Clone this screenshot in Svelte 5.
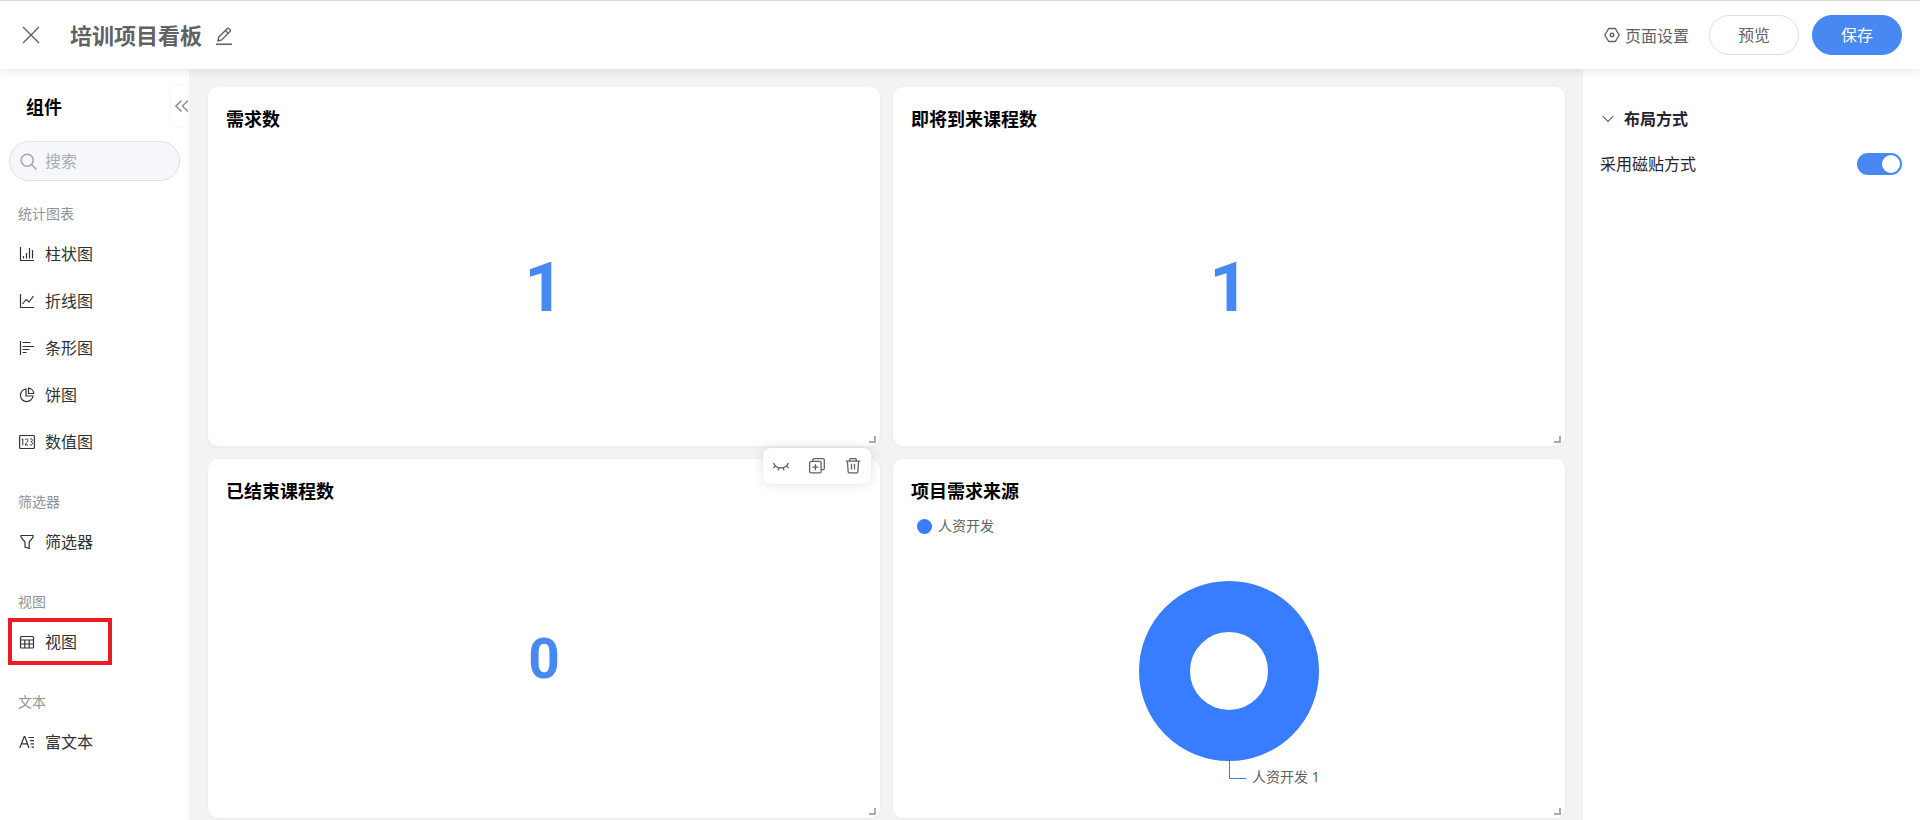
<script lang="ts">
  const groups = [
    {
      title: '统计图表',
      items: [
        { icon: 'bar', label: '柱状图' },
        { icon: 'line', label: '折线图' },
        { icon: 'hbar', label: '条形图' },
        { icon: 'pie', label: '饼图' },
        { icon: 'number', label: '数值图' }
      ]
    },
    { title: '筛选器', items: [{ icon: 'filter', label: '筛选器' }] },
    { title: '视图', items: [{ icon: 'table', label: '视图', marked: true }] },
    { title: '文本', items: [{ icon: 'text', label: '富文本' }] }
  ];

  const cards = [
    { title: '需求数', value: '1', size: 'large' },
    { title: '即将到来课程数', value: '1', size: 'large' },
    { title: '已结束课程数', value: '0', size: 'medium', active: true },
    { title: '项目需求来源', chart: true }
  ];

  let keyword = $state('');
  let tiled = $state(true);
  let layoutOpen = $state(true);
</script>

{#snippet icon(name: string)}
  <svg class="icon" width="16" height="16" viewBox="0 0 16 16" fill="none" stroke="currentColor" stroke-width="1.2" aria-hidden="true">
    {#if name === 'bar'}
      <path d="M1.5 1v13.5H15M4.5 10v2.5M7.5 7v5.5M10.5 2v10.5M13.5 4v8.5" />
    {:else if name === 'line'}
      <path d="M1.5 1v13.5H15M3.5 11l3.6-4.5 3 2.5L14.5 3" />
    {:else if name === 'hbar'}
      <path d="M1.5 1v14M3.5 2.5h8M3.5 6.5H15M3.5 9.5h7M3.5 12.5h4" />
    {:else if name === 'pie'}
      <path d="M7 2a6.3 6.3 0 1 0 7 7H7zM9.5 1.2a5.5 5.5 0 0 1 5.2 5.3H9.5z" />
    {:else if name === 'number'}
      <rect x="0.6" y="1.5" width="14.8" height="13" rx="1" />
      <path stroke-width="1" d="M2.6 5.7l1.2-.9v6.4M6.3 6c.1-1.6 2.7-1.6 2.6.2 0 1.2-2.4 3.2-2.6 4.8h2.8M11 5.2c.8-.9 2.5-.4 2.3 1.1 0 .9-.7 1.4-1.5 1.4 1 0 1.7.6 1.7 1.6 0 1.8-2 2.1-2.7 1.2" />
    {:else if name === 'filter'}
      <path d="M2 1.5h12v1.8L10.2 8v6.5L6 13V8L2 3.3z" />
    {:else if name === 'table'}
      <rect x="1.5" y="2.5" width="13" height="11.5" rx="1" />
      <path d="M1.5 6h13M1.5 10h13M5.8 6v8M10.2 6v8" />
    {:else}
      <path d="M.8 14L5.2 2.5h.6L10 14M2.5 9.8h6M9.5 3.5H15M11 6.7h4M11.7 9.9H15M12.5 13.2H15" />
    {/if}
  </svg>
{/snippet}

<div class="page">
  <header class="topbar">
    <button class="plain close" aria-label="关闭">
      <svg width="18" height="18" viewBox="0 0 18 18" fill="none" stroke="currentColor" stroke-width="1.4">
        <path d="M1 1l16 16M17 1L1 17" />
      </svg>
    </button>
    <h1>培训项目看板</h1>
    <button class="plain edit" aria-label="编辑名称">
      <svg width="16" height="18" viewBox="0 0 16 18" fill="none" stroke="currentColor" stroke-width="1.4">
        <path d="M2 14l.7-3.8L11.4 1.5c.5-.5 1-.5 1.5 0l1.2 1.2c.5.5.5 1 0 1.5L5.7 13 2 14zM9.5 3.5l2.7 2.7M0 17.2h16" />
      </svg>
    </button>
    <div class="actions">
      <button class="plain setting">
        <svg width="16" height="16" viewBox="0 0 16 16" fill="none" stroke="currentColor" stroke-width="1.4">
          <path d="M4.7 1.5h6.6L15.2 8l-3.9 6.5H4.7L.8 8z" stroke-linejoin="round" />
          <circle cx="8" cy="8" r="1.8" />
        </svg>
        页面设置
      </button>
      <button class="btn">预览</button>
      <button class="btn primary">保存</button>
    </div>
  </header>

  <div class="body">
    <aside class="sidebar">
      <div class="sidebar-head">
        <h2>组件</h2>
        <button class="plain collapse" aria-label="收起">
          <svg width="14" height="12" viewBox="0 0 14 12" fill="none" stroke="currentColor" stroke-width="1.6">
            <path d="M6.5.5L1 6l5.5 5.5M13 .5L7.5 6l5.5 5.5" />
          </svg>
        </button>
      </div>
      <label class="search">
        <svg width="17" height="17" viewBox="0 0 17 17" fill="none" stroke="currentColor" stroke-width="1.5">
          <circle cx="7.2" cy="7.2" r="6" />
          <path d="M11.5 11.5l5 5" />
        </svg>
        <input type="text" placeholder="搜索" aria-label="搜索" bind:value={keyword} />
      </label>
      {#each groups as group}
        <section class="group">
          <h3>{group.title}</h3>
          {#each group.items as item}
            <button class="plain item" class:marked={item.marked}>
              {@render icon(item.icon)}
              {item.label}
            </button>
          {/each}
        </section>
      {/each}
    </aside>

    <main class="board">
      {#each cards as card}
        <article class="card">
          <h2>{card.title}</h2>
          {#if card.chart}
            <div class="legend"><span class="dot"></span>人资开发</div>
            <div class="chart">
              <svg width="200" height="220" viewBox="0 0 200 220" role="img" aria-label="人资开发 1">
                <circle cx="100" cy="100" r="64.5" fill="none" stroke="#387dff" stroke-width="51" />
                <path d="M100.5 190v17.5H117" fill="none" stroke="#387dff" />
                <text x="123" y="211">人资开发 1</text>
              </svg>
            </div>
          {:else}
            <div class="value {card.size}">{card.value}</div>
          {/if}
          {#if card.active}
            <div class="tools">
              <button class="plain" aria-label="隐藏">
                <svg width="18" height="18" viewBox="0 0 18 18" fill="none" stroke="currentColor" stroke-width="1.3">
                  <path d="M1.5 6c2.8 6.6 12.2 6.6 15 0M3.5 9l-2.2 2M6.8 10.8l-.8 2.6M11.2 10.8l.8 2.6M14.5 9l2.2 2" />
                </svg>
              </button>
              <button class="plain" aria-label="复制">
                <svg width="18" height="18" viewBox="0 0 18 18" fill="none" stroke="currentColor" stroke-width="1.3">
                  <rect x="1.6" y="4.4" width="11.5" height="11.5" rx="1.5" />
                  <path d="M4.8 4.2V3.1c0-.8.5-1.4 1.3-1.4h8.8c.8 0 1.4.6 1.4 1.4v8.3c0 .8-.6 1.3-1.4 1.3h-1.6M7.4 7.2v6M4.4 10.2h6" />
                </svg>
              </button>
              <button class="plain" aria-label="删除">
                <svg width="18" height="18" viewBox="0 0 18 18" fill="none" stroke="currentColor" stroke-width="1.3">
                  <path d="M1.8 4.2h14.4M5.8 4V2.2c0-.4.3-.6.7-.6h5c.4 0 .7.2.7.6V4M3.4 4.4l.8 10.4c0 .6.5 1 1 1h7.6c.5 0 1-.4 1-1l.8-10.4M7.5 6.8v5.6M10.5 6.8v5.6" />
                </svg>
              </button>
            </div>
          {/if}
          <span class="resize"></span>
        </article>
      {/each}
    </main>

    <aside class="panel">
      <button class="plain panel-title" aria-expanded={layoutOpen} onclick={() => (layoutOpen = !layoutOpen)}>
        <svg width="12" height="8" viewBox="0 0 12 8" fill="none" stroke="#606266" stroke-width="1.1">
          <path d="M.8 1.2L6 6.4l5.2-5.2" />
        </svg>
        布局方式
      </button>
      {#if layoutOpen}
        <label class="switch-row">
          采用磁贴方式
          <input type="checkbox" role="switch" bind:checked={tiled} />
        </label>
      {/if}
    </aside>
  </div>
</div>

<style>
  :global(body) {
    margin: 0;
  }

  .page {
    display: flex;
    flex-direction: column;
    height: 100vh;
    overflow: hidden;
    font-family: 'Noto Sans', 'Noto Sans CJK SC', sans-serif;
    font-size: 16px;
    color: #303133;
  }

  h1,
  h2,
  h3 {
    margin: 0;
  }

  .plain {
    display: flex;
    align-items: center;
    padding: 0;
    border: none;
    background: none;
    color: inherit;
    font: inherit;
    cursor: pointer;
  }

  .icon {
    flex: none;
  }

  .topbar {
    position: relative;
    z-index: 2;
    display: flex;
    flex: none;
    align-items: center;
    box-sizing: border-box;
    height: 69px;
    padding: 0 18px 0 22px;
    border-top: 1px solid #dcdcdc;
    background: #fff;
    box-shadow: 0 2px 10px rgba(0, 0, 0, 0.1);
    color: #606266;
  }

  .topbar h1 {
    margin: 0 14px 0 30px;
    font-size: 22px;
    font-weight: 700;
    line-height: 32px;
  }

  .edit {
    margin-top: 2px;
  }

  .actions {
    display: flex;
    align-items: center;
    margin-left: auto;
  }

  .setting {
    gap: 5px;
    margin-right: 20px;
  }

  .btn {
    width: 90px;
    height: 40px;
    padding: 0 0 2px;
    border: 1px solid #dcdfe6;
    border-radius: 20px;
    background: #fff;
    color: #606266;
    font: inherit;
    cursor: pointer;
  }

  .btn.primary {
    margin-left: 13px;
    border-color: #4888f3;
    background: #4888f3;
    color: #fff;
  }

  .body {
    display: flex;
    flex: 1;
    min-height: 0;
  }

  .sidebar {
    flex: none;
    width: 189px;
    background: #fff;
  }

  .sidebar-head {
    display: flex;
    align-items: center;
    justify-content: space-between;
    height: 40px;
    margin-top: 17px;
    padding-left: 26px;
  }

  .sidebar-head h2 {
    font-size: 18px;
    color: #000;
  }

  .collapse {
    justify-content: flex-end;
    width: 18px;
    height: 40px;
    border-radius: 8px 0 0 8px;
    box-shadow: 0 0 5px rgba(0, 0, 0, 0.07);
    clip-path: inset(-6px 0 -6px -6px);
    color: #909399;
  }

  .search {
    display: flex;
    align-items: center;
    gap: 8px;
    box-sizing: border-box;
    height: 40px;
    margin: 15px 9px 21px;
    padding: 0 10px;
    border: 1px solid #dcdfe6;
    border-radius: 20px;
    background: #f5f7fa;
    color: #a0a4ab;
  }

  .search svg {
    flex: none;
  }

  .search input {
    flex: 1;
    min-width: 0;
    padding: 0;
    border: none;
    outline: none;
    background: none;
    font: inherit;
  }

  .search input::placeholder {
    color: #a8abb2;
  }

  .group {
    margin-bottom: 25px;
  }

  .group h3 {
    margin-bottom: 4px;
    padding-left: 18px;
    font-size: 14px;
    font-weight: 400;
    line-height: 24px;
    color: #909399;
  }

  .item {
    gap: 10px;
    box-sizing: border-box;
    width: 104px;
    height: 47px;
    margin-left: 8px;
    padding-left: 11px;
    line-height: 24px;
  }

  .item.marked {
    outline: 4px solid #ed1c24;
    outline-offset: -4px;
  }

  .board {
    display: grid;
    flex: 1;
    grid-template-columns: 1fr 1fr;
    grid-auto-rows: 359px;
    gap: 13px;
    min-width: 0;
    padding: 18px 18px 0 19px;
    background: #f2f3f5;
  }

  .card {
    position: relative;
    display: flex;
    flex-direction: column;
    border-radius: 10px;
    background: #fff;
    box-shadow: 0 1px 4px rgba(0, 0, 0, 0.04);
  }

  .card h2 {
    padding: 19px 18px 0;
    font-size: 18px;
    font-weight: 700;
    line-height: 26px;
    color: #000;
  }

  .value {
    display: flex;
    flex: 1;
    align-items: center;
    justify-content: center;
    padding-bottom: 4px;
    font-family: Roboto, sans-serif;
    font-weight: 700;
    line-height: 1;
    color: #4888f3;
  }

  .value.large {
    font-size: 69px;
  }

  .value.medium {
    font-size: 55px;
  }

  .legend {
    display: flex;
    align-items: center;
    gap: 6px;
    margin: 12px 0 0 24px;
    font-size: 14px;
    line-height: 20px;
    color: #606266;
  }

  .dot {
    width: 15px;
    height: 15px;
    border-radius: 50%;
    background: #387dff;
  }

  .chart {
    display: flex;
    justify-content: center;
    margin-top: 35px;
  }

  .chart svg {
    overflow: visible;
  }

  .chart text {
    font-size: 14px;
    fill: #606266;
  }

  .tools {
    position: absolute;
    top: -11px;
    right: 9px;
    display: flex;
    align-items: center;
    gap: 18px;
    height: 36px;
    padding: 0 9px;
    border-radius: 8px;
    background: #fff;
    box-shadow: 0 0 12px rgba(0, 0, 0, 0.12);
    color: #606266;
  }

  .resize {
    position: absolute;
    right: 4px;
    bottom: 3px;
    width: 5px;
    height: 5px;
    border-right: 2px solid #aaa;
    border-bottom: 2px solid #aaa;
  }

  .panel {
    flex: none;
    box-sizing: border-box;
    width: 337px;
    padding: 36px 18px 0 17px;
    background: #fff;
    color: #1f2333;
  }

  .panel-title {
    gap: 10px;
    padding-left: 2px;
    font-weight: 700;
    line-height: 28px;
  }

  .switch-row {
    display: flex;
    align-items: center;
    justify-content: space-between;
    margin-top: 17px;
    line-height: 28px;
  }

  .switch-row input {
    display: flex;
    align-items: center;
    box-sizing: border-box;
    width: 45px;
    height: 22px;
    margin: 0;
    padding: 0 2px;
    border-radius: 11px;
    background: #dcdfe6;
    appearance: none;
    cursor: pointer;
  }

  .switch-row input::before {
    content: '';
    width: 18px;
    height: 18px;
    border-radius: 50%;
    background: #fff;
  }

  .switch-row input:checked {
    justify-content: flex-end;
    background: #4888f3;
  }
</style>
